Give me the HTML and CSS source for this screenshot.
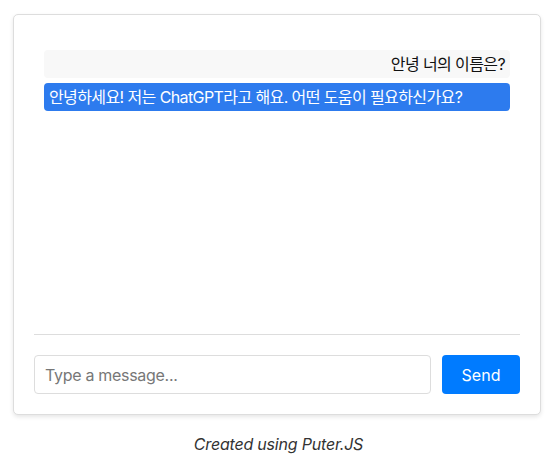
FILE: index.html
```html
<!DOCTYPE html>
<html lang="ko">
<head>
<meta charset="utf-8">
<title>Chat</title>
<link rel="stylesheet" href="styles.css">
</head>
<body>
<div class="chat-container">
  <div class="messages">
    <div class="message user">안녕 너의 이름은?</div>
    <div class="message bot">안녕하세요! 저는 ChatGPT라고 해요. 어떤 도움이 필요하신가요?</div>
  </div>
  <div class="input-row">
    <input class="msg-input" type="text" placeholder="Type a message...">
    <button class="send-btn">Send</button>
  </div>
</div>
<p class="footer">Created using Puter.JS</p>
</body>
</html>
```

FILE: styles.css
```css
html, body {
  margin: 0;
  padding: 0;
  background: #fff;
}
body {
  font-family: Inter, "Noto Sans CJK KR", sans-serif;
  font-size: 16px;
  color: #000;
  padding-top: 14px;
}
.chat-container {
  width: 486px;
  margin-left: 13px;
  border: 1px solid #ddd;
  border-radius: 5px;
  padding: 20px;
  box-shadow: 0 2px 4px rgba(0, 0, 0, 0.1);
  background: #fff;
}
.messages {
  height: 300px;
  box-sizing: border-box;
  border-bottom: 1px solid #ddd;
  padding: 10px;
  overflow: hidden;
}
.message {
  margin: 5px 0;
  padding: 5px;
  border-radius: 4px;
  line-height: 18px;
  font-family: Inter, "Noto Sans CJK KR", sans-serif;
  letter-spacing: -0.6px;
}
.message.user {
  background: #f8f8f8;
  text-align: right;
  color: #111;
}
.message.bot {
  background: #2d7bee;
  color: #fff;
}
.input-row {
  display: flex;
  gap: 11px;
  margin-top: 20px;
}
.msg-input {
  flex: 1;
  height: 39px;
  box-sizing: border-box;
  border: 1px solid #ddd;
  border-radius: 4px;
  padding: 0 10px;
  font-family: Inter, sans-serif;
  font-size: 16px;
  letter-spacing: -0.3px;
  outline: none;
}
.msg-input::placeholder {
  color: #777;
}
.send-btn {
  width: 78px;
  height: 39px;
  border: none;
  border-radius: 4px;
  background: #007bff;
  color: #fff;
  font-family: Inter, sans-serif;
  font-size: 16px;
  cursor: pointer;
}
.footer {
  text-align: center;
  font-style: italic;
  color: #333;
  margin: 20px 0 0;
  line-height: 19px;
  letter-spacing: -0.2px;
}
```
